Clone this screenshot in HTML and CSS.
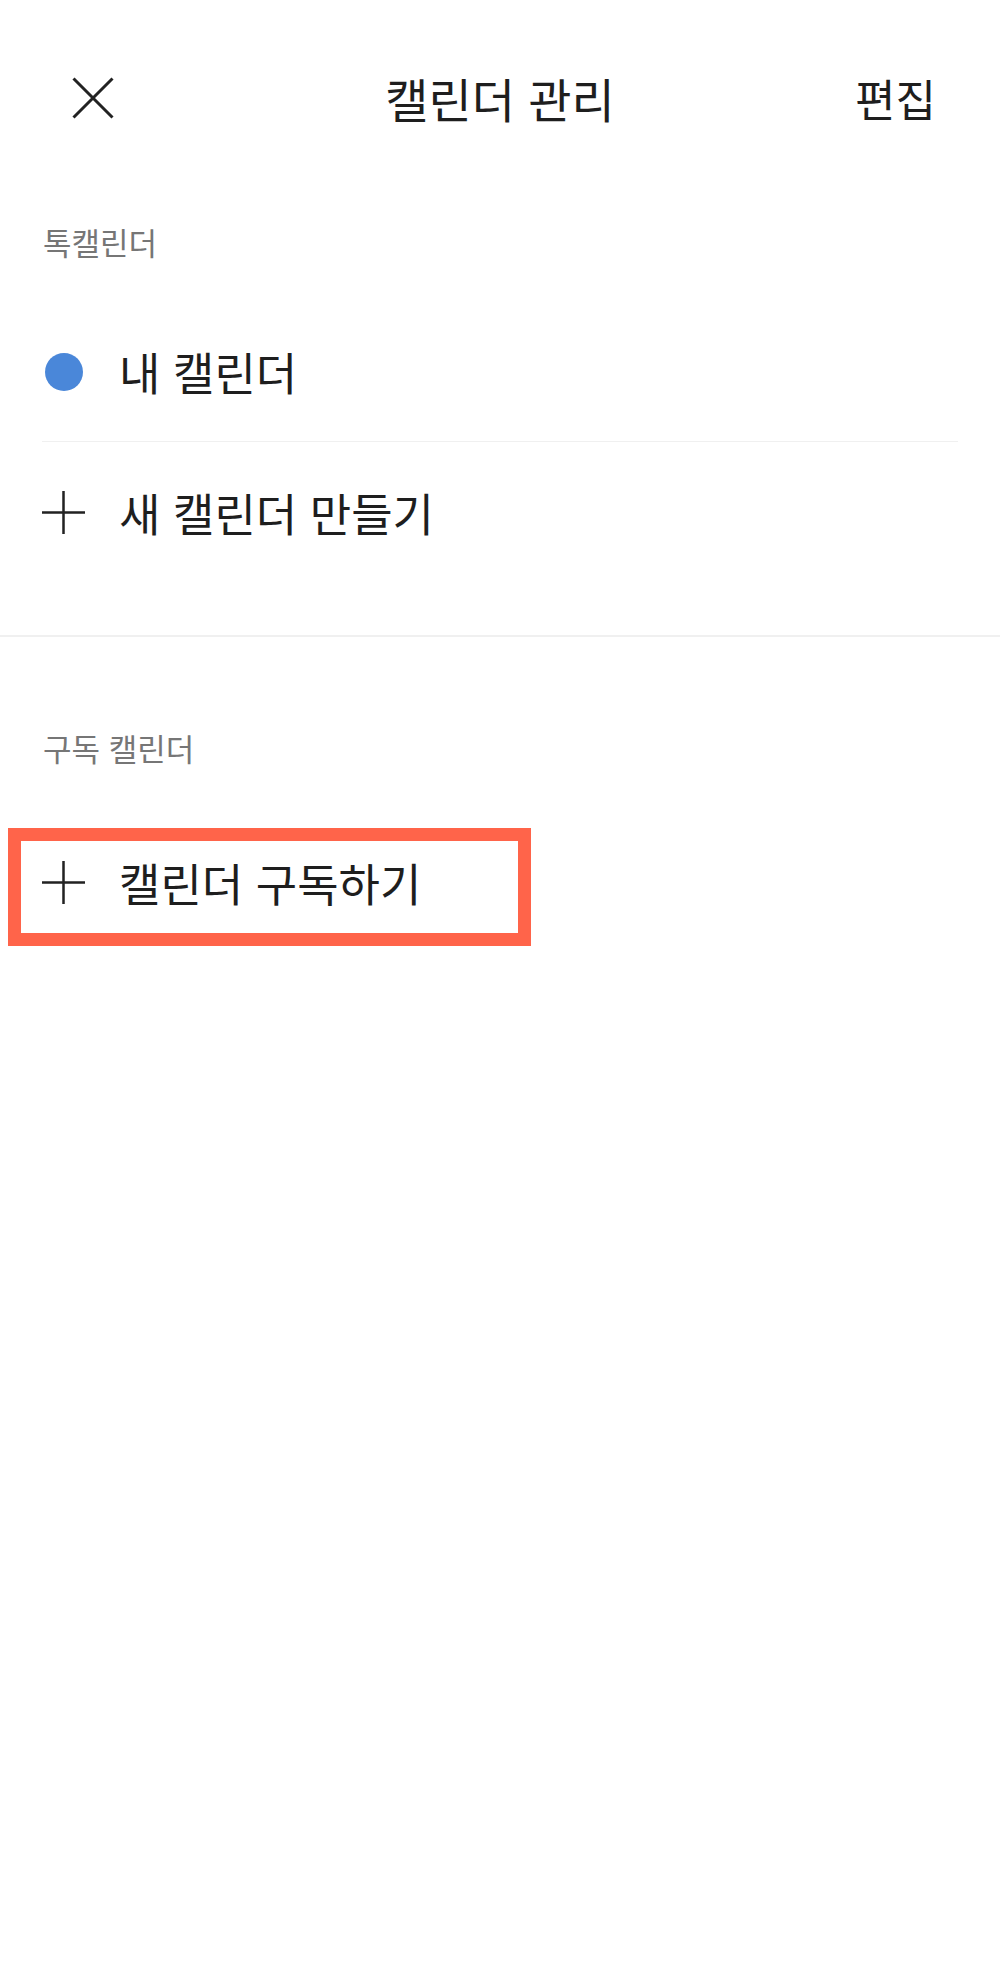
FILE: index.html
```html
<!DOCTYPE html>
<html lang="ko">
<head>
    <meta charset="UTF-8">
    <meta name="viewport" content="width=device-width, initial-scale=1.0">
    <title>캘린더 관리</title>
    <link rel="stylesheet" href="styles.css">
</head>
<body>
    <div id="container">
        <header class="top-bar">
            <div class="top-left">
                <svg class="close-icon" width="42" height="42" viewBox="0 0 42 42">
                    <path d="M1.5 1.5 L40.5 40.5 M40.5 1.5 L1.5 40.5" stroke="#222" stroke-width="3" fill="none"/>
                </svg>
            </div>
            <h1 class="top-title">캘린더 관리</h1>
            <div class="top-right">편집</div>
        </header>

        <section class="group group-talk">
            <div class="group-label">톡캘린더</div>
            <div class="row row-line">
                <span class="row-icon"><span class="dot"></span></span>
                <span class="row-text">내 캘린더</span>
            </div>
            <div class="row row-add">
                <span class="row-icon">
                    <svg width="43" height="43" viewBox="0 0 43 43">
                        <path d="M21.5 0 V43 M0 21.5 H43" stroke="#222" stroke-width="2.5" fill="none"/>
                    </svg>
                </span>
                <span class="row-text">새 캘린더 만들기</span>
            </div>
        </section>

        <section class="group group-sub">
            <div class="group-label">구독 캘린더</div>
            <div class="row row-marked">
                <span class="row-icon">
                    <svg width="43" height="43" viewBox="0 0 43 43">
                        <path d="M21.5 0 V43 M0 21.5 H43" stroke="#222" stroke-width="2.5" fill="none"/>
                    </svg>
                </span>
                <span class="row-text">캘린더 구독하기</span>
            </div>
        </section>
    </div>
</body>
</html>
```

FILE: styles.css
```css
body {
    font-family: "Noto Sans CJK KR", "Noto Sans", sans-serif;
    background-color: #fff;
    color: #1e1e1e;
    margin: 0;
    padding: 0;
}

#container {
    width: 100%;
    min-height: 100vh;
}

.top-bar {
    display: grid;
    grid-template-columns: 1fr auto 1fr;
    align-items: center;
    height: 196px;
}

.top-left {
    padding-left: 72px;
    display: flex;
    align-items: center;
}

.close-icon {
    display: block;
}

.top-title {
    margin: 0;
    font-size: 47px;
    font-weight: normal;
    line-height: 50px;
}

.top-right {
    text-align: right;
    padding-right: 64px;
    font-size: 44px;
    line-height: 50px;
}

.group-label {
    padding: 26px 0 0 43px;
    font-size: 31px;
    line-height: 40px;
    color: #767676;
}

.group-talk {
    border-bottom: 2px solid #f0f0f0;
}

.group-talk .group-label {
    padding-bottom: 40px;
}

.row {
    display: flex;
    align-items: center;
    padding-left: 42px;
    font-size: 45px;
}

.row-line {
    height: 139px;
    margin: 0 42px 0 42px;
    padding-left: 0;
    border-bottom: 1px solid #f0f0f0;
}

.row-add {
    height: 140px;
    margin-bottom: 53px;
}

.row-icon {
    width: 43px;
    margin-right: 34px;
    display: flex;
    align-items: center;
    justify-content: center;
}

.row-icon svg {
    display: block;
}

.dot {
    width: 38px;
    height: 38px;
    border-radius: 50%;
    background: #4a87d9;
}

.group-sub .group-label {
    padding-top: 91px;
    padding-bottom: 60px;
}

.row-marked {
    box-sizing: border-box;
    width: 523px;
    height: 118px;
    margin-left: 8px;
    padding-left: 21px;
    padding-bottom: 10px;
    border: 13px solid #ff644a;
}
```
